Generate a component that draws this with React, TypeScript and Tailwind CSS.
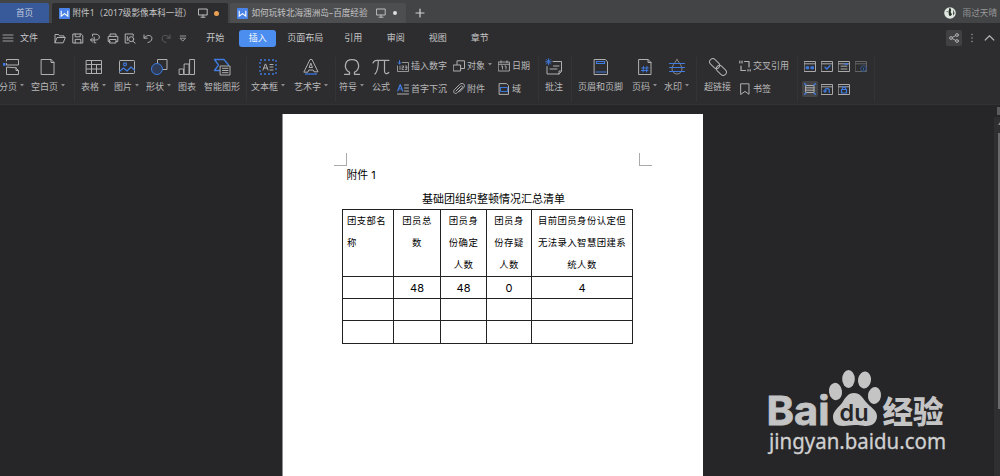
import React from "react";

type P = { children: React.ReactNode; w?: number; h?: number; vb?: string; c?: string };

const B = "#3f7be0";

function Svg({ children, w = 18, h = 18, vb, c = "#b0b0b1" }: P) {
  return (
    <svg className="block shrink-0" width={w} height={h} viewBox={vb ?? `0 0 ${w} ${h}`} fill="none" stroke={c} strokeWidth="1" strokeLinecap="round" strokeLinejoin="round">
      {children}
    </svg>
  );
}

const Caret = () => (
  <svg className="ml-[3px] mb-[3px] block shrink-0" width="4" height="3" viewBox="0 0 4 3">
    <path d="M0 0h4L2 2.6z" fill="#8b8b8d" />
  </svg>
);

function Big({ icon, label, caret, cls }: { icon: React.ReactNode; label: string; caret?: boolean; cls: string }) {
  return (
    <div className={"flex shrink-0 flex-col items-center " + cls}>
      <div className="flex h-[18px] items-center justify-center">{icon}</div>
      <div className="mt-[4px] flex h-[14px] items-center whitespace-nowrap leading-[14px]">
        <span>{label}</span>
        {caret && <Caret />}
      </div>
    </div>
  );
}

function Small({ icon, label, caret, gap = "gap-[2px]" }: { icon: React.ReactNode; label: string; caret?: boolean; gap?: string }) {
  return (
    <div className={"flex h-[14px] items-center whitespace-nowrap leading-[14px] " + gap}>
      <div className="flex w-[12px] shrink-0 justify-center">{icon}</div>
      <div className="flex items-center">
        <span>{label}</span>
        {caret && <Caret />}
      </div>
    </div>
  );
}

const Divider = ({ cls }: { cls: string }) => <div className={"mt-[-1px] h-[45px] w-px shrink-0 bg-[#343436] " + cls} />;

const Logo = () => (
  <svg className="block shrink-0" width="11" height="11" viewBox="0 0 11 11">
    <rect width="11" height="11" rx="0.8" fill="#4a83e8" />
    <path d="M2.2 2.8v5.4l3.3-2.6 3.3 2.6V2.8" fill="none" stroke="#fff" strokeWidth="1.1" />
  </svg>
);

const Monitor = () => (
  <Svg w={10} h={10} c="#bdbdbe">
    <path d="M.8 1h8.400v6H.8zM5 7v2M3 9.200h4" />
  </Svg>
);

function Box({ children, dim }: { children: React.ReactNode; dim?: boolean }) {
  return (
    <Svg w={12} h={11} c={dim ? "#656567" : "#a9a9aa"}>
      <path d="M.5.5h11v10H.5zM.5 2.8h11" />
      {children}
    </Svg>
  );
}

function Titles() {
  return (
    <div className="flex h-[23px] items-end bg-[#434445] text-[8.6px] text-[#c4c4c5]">
      <div className="flex h-5 w-[49px] items-center justify-center rounded-tr-[2px] bg-[#38599a] text-[#c3cbdc]">首页</div>
      <div className="ml-[3px] flex h-5 w-[176px] items-center rounded-t-[2px] bg-[#2d2d2f] pl-[6.5px]">
        <Logo />
        <span className="ml-[3px] w-[118px] whitespace-nowrap">附件1（2017级影像本科一班）</span>
        <span className="ml-[7px]"><Monitor /></span>
        <span className="ml-[6px] h-[5px] w-[5px] rounded-full bg-[#eba152]" />
      </div>
      <div className="ml-[2px] flex h-5 w-[176px] items-center rounded-t-[2px] bg-[#4d4e50] pl-[6.5px]">
        <Logo />
        <span className="ml-[4px] w-[117px] whitespace-nowrap">如何玩转北海涠洲岛–百度经验</span>
        <span className="ml-[7px]"><Monitor /></span>
        <span className="ml-[7px] h-[4px] w-[4px] rounded-full bg-[#dededf]" />
      </div>
      <div className="ml-[9px] flex h-5 items-center">
        <Svg w={10} h={10} c="#d2d2d3"><path d="M5 1v8M1 5h8" strokeWidth="1.2" /></Svg>
      </div>
      <div className="ml-auto mr-[3px] flex h-5 items-center text-[#98989a]">
        <svg className="mr-[7px] block" width="12" height="12" viewBox="0 0 12 12">
          <circle cx="6" cy="6" r="5.8" fill="#dfe5df" />
          <path d="M5.500.4Q8 2 6.600 5L8 7.500 6.500 9 5 8.500 4.500 5zM9.500 2.500l1 4-1.500 2z" fill="#28302a" />
          <path d="M2.500 4.500h2" stroke="#7c8a7c" />
        </svg>
        <span>雨过天晴</span>
      </div>
    </div>
  );
}

function Menu() {
  return (
    <div className="flex h-[30px] items-center whitespace-nowrap text-[9px] text-[#c6c6c7]">
      <span className="ml-[2px]"><Svg w={12} h={8} c="#aaaaab"><path d="M1 1h10M1 4h10M1 7h10" strokeWidth=".9" /></Svg></span>
      <span className="ml-[6px] w-[34px]">文件</span>
      <div className="flex items-center gap-[5.6px]">
        <Svg w={12} h={11}><path d="M1 9.500v-8h3.500l1 1.400H10v1.600M1 9.500l2-5h8.300l-2 5z" /></Svg>
        <Svg w={12} h={11}><path d="M1.200 1h8l1.600 1.600V10H1.200zM3.200 1v2.800h5V1M3.200 10V6.400h5.600V10" /></Svg>
        <Svg w={12} h={11}><path d="M3.500 3V1.200h3.400c4.600 0 4.600 5.800 0 5.800H1.500M3.500 5 1.500 7l2 1.900M5.200 4.200v5.600h1.600" /></Svg>
        <Svg w={12} h={11}><path d="M3 3.400V1h6v2.400M3 8.500H1.200V3.400h9.600v5.100H9M3 6.500h6V10H3z" /></Svg>
        <Svg w={12} h={11}><path d="M5 10H1.200V1h8v2.200" /><circle cx="7.200" cy="6.200" r="2.500" /><path d="m9 8.200 2.200 2M3.300 3.500v4" /></Svg>
        <Svg w={12} h={11}><path d="M2 2v3.200h3.200M2.300 5C5 1 10 2 9.900 5.500 9.800 8 8 9 6 9.500" /></Svg>
        <Svg w={12} h={11} c="#5d5d5f"><path d="M10 2v3.200H6.800M9.700 5C7 1 2 2 2.100 5.500 2.200 8 4 9 6 9.500" /></Svg>
        <Svg w={12} h={11}><path d="M3.200 3h5.600M3.400 5.200h5.200L6 7.900z" strokeWidth=".8" /></Svg>
      </div>
      <span className="ml-[17px]">开始</span>
      <span className="ml-[15px] flex h-[17px] w-[37px] items-center justify-center rounded-[3px] bg-[#4c8df0] text-[#f4f8ff]">插入</span>
      <span className="ml-[11px]">页面布局</span>
      <span className="ml-[21px]">引用</span>
      <span className="ml-[24.500px]">审阅</span>
      <span className="ml-[24px]">视图</span>
      <span className="ml-[24px]">章节</span>
      <div className="ml-auto mr-[5px] flex items-center">
        <span className="flex h-4 w-4 items-center justify-center rounded-[2px] bg-[#414143]">
          <Svg w={10} h={10}><circle cx="2" cy="5" r="1.4" /><circle cx="8" cy="2" r="1.4" /><circle cx="8" cy="8" r="1.4" /><path d="m3.300 4.400 3.400-1.800M3.300 5.600l3.400 1.800" /></Svg>
        </span>
        <span className="ml-[8px]"><Svg w={4} h={10}><path d="M2 1.400v.1M2 4.900V5M2 8.400v.1" strokeWidth="1.300" /></Svg></span>
        <span className="ml-[10px]"><Svg w={11} h={8}><path d="m1.200 6 4.300-4.200L9.800 6" strokeWidth="1.200" /></Svg></span>
      </div>
    </div>
  );
}

function Ribbon() {
  return (
    <div className="flex h-[51px] items-start overflow-hidden pt-[5px] text-[9px] text-[#b9b9ba]">
      <Big cls="ml-[-1px] w-[25px]" label="分页" caret icon={<Svg><path d="M3.500 3V1.500h12v5.500h-12V5.500M3.500 9.500v7h12v-4l-2.500-2.500z" /><path d="M13 9.500v3h2.500" /><path d="M0 5h2.500v2.800H0z" fill={B} stroke="none" /></Svg>} />
      <Big cls="ml-[7px] w-[34px]" label="空白页" caret icon={<Svg><path d="M2.500 1.500h9.500l3 3v12H2.500zM12 1.500v3h3" /></Svg>} />
      <Divider cls="ml-[9px]" />
      <Big cls="ml-[6px] w-[25px]" label="表格" caret icon={<Svg><path d="M1.500 2.500h15v13h-15zM1.500 6.500h15M1.500 11h15M6.500 2.500v13M11.500 6.500v9" /></Svg>} />
      <Big cls="ml-[8px] w-[25px]" label="图片" caret icon={<Svg><rect x="1.500" y="2.500" width="15" height="13" rx=".8" /><g stroke={B} strokeWidth="1.200"><circle cx="7" cy="6.300" r="1.500" /><path d="m2 13 3.500-3 3.500 3 4-4 3.500 3" /></g></Svg>} />
      <Big cls="ml-[7px] w-[25px]" label="形状" caret icon={<Svg><path d="M7.500 5V1.500h9.500v10h-4" /><circle cx="7" cy="11" r="5.500" stroke={B} fill="#2e3c58" /></Svg>} />
      <Big cls="ml-[7px] w-[18px]" label="图表" icon={<Svg><path d="M1.500 11h4v5.500h-4zM6.500 6h4.500v10.500H6.500zM12 1.500h4.500v15H12z" /></Svg>} />
      <Big cls="ml-[8px] w-[36px]" label="智能图形" icon={<Svg><path d="M7 12.500H1.500l4-5.500-4-5.500h9.500L15.500 7" stroke={B} strokeWidth="1.300" /><path d="M7.500 8H17v9H7.500zM9.500 10.300H15M9.500 12.500H15M9.500 14.700H15" fill="#2d2d2f" /></Svg>} />
      <Divider cls="ml-[6px]" />
      <Big cls="ml-[4px] w-[34px]" label="文本框" caret icon={<Svg><path d="M1 2h16v14H1z" stroke={B} strokeWidth="1.300" strokeDasharray="2 2" strokeLinecap="butt" /><path d="m4 12 2.300-6h.4L9 12M4.800 10h3.400M11 6.500h3M11 9h3M11 12h3" /></Svg>} />
      <Big cls="ml-[9px] w-[34px]" label="艺术字" caret icon={<Svg><path d="M2 13.800 8 1.500h2l6 12.300H12l-.8-1.800H6.800l-.8 1.800zM7.500 9.500h3L9 5.500z" /><path d="M3 16h12" stroke="#345ca4" strokeWidth="2" strokeLinecap="butt" /></Svg>} />
      <Divider cls="ml-[7px]" />
      <Big cls="ml-[3px] w-[25px]" label="符号" caret icon={<Svg><path d="M1.500 16.300h5v-2C0 10.500 1.500 1.600 9 1.600s9 8.900 2.500 12.700v2h5" strokeWidth="1.300" /></Svg>} />
      <Big cls="ml-[8px] w-[18px]" label="公式" icon={<Svg><path d="M1 5c1-2.600 2-2.700 4-2.700h12M6.300 2.500c0 7-.8 11-3.300 13.500M12.500 2.500v10.500c0 3 2.500 3.500 4.200 1.500" strokeWidth="1.200" /></Svg>} />
      <div className="ml-[7px] flex w-[50px] shrink-0 flex-col gap-[9px] pt-[1px]">
        <Small label="插入数字" icon={<Svg w={12} h={12}><path d="M5.500 2.500h6v9H.5V6M3 6v3.500M5 6h1.500v1.700H5v1.800h1.500M8.300 6h1.500v3.500H8.300M8.500 7.700h1.300" strokeWidth=".8" /><path d="M2.500.5v3.500M1 2.500 2.500 4 4 2.500" stroke={B} /></Svg>} />
        <Small label="首字下沉" icon={<Svg w={12} h={12}><path d="m.7 8 2.500-6.500L5.700 8M1.700 6h3" stroke={B} strokeWidth="1.200" /><path d="M7.500 2h4M7.500 5h4M7.500 8h4M.5 11h11" /></Svg>} />
      </div>
      <div className="ml-[6px] flex w-[40px] shrink-0 flex-col gap-[9px] pt-[1px]">
        <Small label="对象" caret icon={<Svg w={12} h={12}><path d="M4 4.500V.8h7.500v7.700H8M.6 5h7v6h-7z" /></Svg>} />
        <Small label="附件" icon={<Svg w={12} h={12}><path d="m3 8 4.600-4.600c1.400-1.400 2.800.2 1.500 1.500L4.500 9.500C2 12-.8 9 1.500 6.600l5-5c3.400-3.200 6.500.6 4 3.300L6.500 9" /></Svg>} />
      </div>
      <div className="ml-[5px] flex w-[32px] shrink-0 flex-col gap-[9px] pt-[1px]">
        <Small label="日期" icon={<Svg w={12} h={12}><path d="M.6 2h10.800v9H.6zM.6 4.300h10.800M3 .8v2M9 .8v2M3.500 6h1v3M7 6h1v3" strokeWidth=".9" /></Svg>} />
        <Small label="域" icon={<Svg w={12} h={12}><path d="M1.500.6h7l2 2v8.800h-9z" /><path d="M2.500 4.500h7v4h-7z" stroke={B} strokeDasharray="2 1" /></Svg>} />
      </div>
      <Divider cls="ml-[8px]" />
      <Big cls="ml-[6px] w-[18px]" label="批注" icon={<Svg><path d="M8 3.500h8.500v10l-2.500 2.500H2V8.500M16.500 13H14v3M8.500 8H14M5 11h7" /><path d="M3.500.8v6M1.300 1.600l4.400 4.400M5.700 1.600 1.300 6M.7 3.800h5.600" stroke={B} strokeWidth=".9" /></Svg>} />
      <Divider cls="ml-[8px]" />
      <Big cls="ml-[6px] w-[45px]" label="页眉和页脚" icon={<Svg><path d="M2.500 1.500h11L15.500 4v12.500h-13z" /><path d="M4.500 3.500h8v2h-8zM4 14h10" stroke={B} strokeWidth="1.200" /></Svg>} />
      <Big cls="ml-[9px] w-[25px]" label="页码" caret icon={<Svg><path d="M3 1.500h9L15 4.500v12H3zM12 1.500v3h3" /><path d="M7.500 8.500 7 14M11 8.500l-.5 5.500M5.800 10h6.500M5.500 12.500H12" stroke={B} /></Svg>} />
      <Big cls="ml-[7px] w-[25px]" label="水印" caret icon={<Svg><path d="M9 1.500C6 6 4 8 4 11a5 5 0 0 0 10 0c0-3-2-5-5-9.500z" stroke="#88888a" /><path d="M1.500 5.500h15M1.500 9.500h15M1.500 13.500h15" stroke={B} strokeWidth="1.200" /></Svg>} />
      <Divider cls="ml-[7px]" />
      <Big cls="ml-[7px] w-[27px]" label="超链接" icon={<Svg><g transform="rotate(45 9 9)"><rect x="-1.500" y="5.800" width="11.500" height="6.400" rx="3.200" /><rect x="8" y="5.800" width="11.500" height="6.400" rx="3.200" /></g></Svg>} />
      <div className="ml-[8px] flex w-[50px] shrink-0 flex-col gap-[9px] pt-[1px]">
        <Small label="交叉引用" icon={<Svg w={12} h={12}><path d="M5.500 1.500H10v5.500M2 6v4.500h4.500M.8 1v2M3 1v2M9 9.500v1.500M11.200 9.500v1.500" strokeWidth="1.200" /></Svg>} />
        <Small label="书签" icon={<Svg w={12} h={12}><path d="M2 .8h8v10.500L6 8.400l-4 2.900z" /></Svg>} />
      </div>
      <Divider cls="ml-[8px]" />
      <div className="ml-[4px] grid w-[68px] shrink-0 grid-cols-4 gap-y-[7px] [&>span]:flex [&>span]:h-4 [&>span]:w-4 [&>span]:items-center [&>span]:justify-center">
        <span><Box><path d="M2.500 5.800h2.200v2H2.500zM7.300 5.800h2.200v2H7.300z" fill={B} stroke={B} /></Box></span>
        <span><Box><path d="m4 6.300 1.800 1.700L9 4.800" stroke={B} strokeWidth="1.300" /></Box></span>
        <span><Box><path d="M3 5.200h6M3 8h6" /><path d="M7 3h2.500" stroke={B} strokeWidth="1.500" /></Box></span>
        <span><Box dim><circle cx="8.500" cy="7.500" r="2.800" fill="#2d2d2f" stroke="#315894" /><path d="M8.500 7v2" stroke="#315894" /></Box></span>
        <span className="rounded-[2px] bg-[#444446]"><Svg w={12} h={12}><path d="M2 2.500h8v7H2zM2 4.800h8M2 7.200h8" /><path d="M.7.7 2 2M11.300.7 10 2M.7 11.300 2 10M11.300 11.300 10 10" stroke={B} strokeWidth="1.400" /></Svg></span>
        <span><Box><path d="M4 8V6.500a2 1.700 0 0 1 4.300 0V8.500M2.800 7 4 8.200 5.200 7" stroke={B} strokeWidth="1.200" /></Box></span>
        <span><Box><path d="M3.500 5.500h5v3.500h-5zM4.500 5.500V4c0-1.500 3-1.500 3 0v1.500" stroke={B} strokeWidth="1.200" /></Box></span>
      </div>
      <Divider cls="ml-[4px]" />
    </div>
  );
}

const heads = [
  ["团支部名", "称"],
  ["团员总", "数"],
  ["团员身", "份确定", "人数"],
  ["团员身", "份存疑", "人数"],
  ["目前团员身份认定但", "无法录入智慧团建系", "统人数"],
];

function Sheet() {
  return (
    <div className="ml-[282px] h-full w-[421px] border-l border-[#8e8e90] bg-white text-black">
      <div className="flex h-[52px] items-end justify-between pl-[51px] pr-[51px]">
        <div className="h-[13px] w-[13px] border-b border-r border-[#aaa]" />
        <div className="h-[13px] w-[13px] border-b border-l border-[#aaa]" />
      </div>
      <div className="ml-[63.500px] mt-[2px] h-4 font-['Inter','Noto_Sans_CJK_SC',sans-serif] text-[10.8px] leading-4">附件 1</div>
      <div className="ml-[59px] mt-[5px] h-[20px] w-[303px] text-center text-[11px] leading-[19px]">基础团组织整顿情况汇总清单</div>
      <table className="ml-[59px] w-[291px] table-fixed border-collapse text-center [&_td]:border [&_td]:border-[#222] [&_td]:p-0">
        <colgroup>
          <col className="w-[51px]" /><col className="w-[47px]" /><col className="w-[46px]" /><col className="w-[45px]" /><col className="w-[101px]" />
        </colgroup>
        <tbody>
          <tr className="h-[67px] align-top">
            {heads.map((lines, i) => (
              <td key={i} className={i === 0 ? "text-left" : ""}>
                {lines.map((l) => (
                  <div key={l} className={"h-[22px] whitespace-nowrap text-[9.400px] leading-[22px] tracking-[0.4px] " + (i === 0 ? "pl-[4px]" : "")}>{l}</div>
                ))}
              </td>
            ))}
          </tr>
          <tr className="h-[22px] font-['Inter',sans-serif] text-[11px] leading-[20px]">
            <td /><td>48</td><td>48</td><td>0</td><td>4</td>
          </tr>
          <tr className="h-[22px]"><td /><td /><td /><td /><td /></tr>
          <tr className="h-[23px]"><td /><td /><td /><td /><td /></tr>
        </tbody>
      </table>
    </div>
  );
}

const Watermark = () => (
  <svg className="absolute left-[760px] top-[365px]" width="195" height="95" viewBox="760 365 195 95" fill="#c4c4c5">
    <text x="766.500" y="425" stroke="#c4c4c5" strokeWidth=".8" className="font-['Inter',sans-serif] font-bold" fontSize="39.500" textLength="63" lengthAdjust="spacingAndGlyphs">Bai</text>
    <ellipse cx="835.500" cy="391.500" rx="6.500" ry="8.700" transform="rotate(-8 835.500 391.500)" />
    <ellipse cx="848.500" cy="379" rx="6.300" ry="9" />
    <ellipse cx="864.500" cy="380" rx="6.500" ry="8.500" transform="rotate(8 864.500 380)" />
    <ellipse cx="874.500" cy="395.500" rx="6.500" ry="8.500" transform="rotate(8 874.500 395.500)" />
    <path d="M854 393C848 393 845 398 842 403 839 407 833 411 833 417 833 423 837 426 843 426 848 426 850 425 855 425S862 426 866 426C873 426 877 422 877 416 877 410 870 407 866 402 862 397 860 393 854 393z" />
    <text x="839.500" y="421" fill="#262628" className="font-['Inter',sans-serif] font-semibold" fontSize="23" textLength="29" lengthAdjust="spacingAndGlyphs">du</text>
    <text x="882.500" y="422.500" className="font-['Noto_Sans_CJK_SC',sans-serif] font-black" fontSize="31" textLength="61" lengthAdjust="spacingAndGlyphs">经验</text>
    <text x="769" y="449" fill="#d0d0d1" stroke="#d0d0d1" strokeWidth=".3" fontSize="21" textLength="177" lengthAdjust="spacingAndGlyphs">jingyan.baidu.com</text>
  </svg>
);

export default function App() {
  return (
    <div className="relative flex h-[476px] w-[1000px] flex-col overflow-hidden bg-[#262628] font-['Noto_Sans','Noto_Sans_CJK_SC',sans-serif]">
      <Titles />
      <div className="h-[81px] shrink-0 bg-[#2d2d2f]">
        <Menu />
        <Ribbon />
      </div>
      <div className="flex min-h-0 flex-1 justify-between border-t border-[#323234]">
        <div className="pt-[9px]"><Sheet /></div>
        <div className="flex w-[6px] flex-col items-end">
          <div className="mt-[2px] h-[8px] w-[3px] bg-[#5b5b5d]" />
          <div className="mt-[2px] flex w-[6px] flex-1 flex-col items-end bg-[#2f2f31]">
            <svg className="mt-[5px] block" width="2" height="3" viewBox="0 0 2 3"><path d="M0 3 2 0v3z" fill="#8a8a8c" /></svg>
            <div className="mt-[8px] h-[276px] w-[2px] bg-[#6b6b6d]" />
          </div>
        </div>
      </div>
      <Watermark />
    </div>
  );
}
